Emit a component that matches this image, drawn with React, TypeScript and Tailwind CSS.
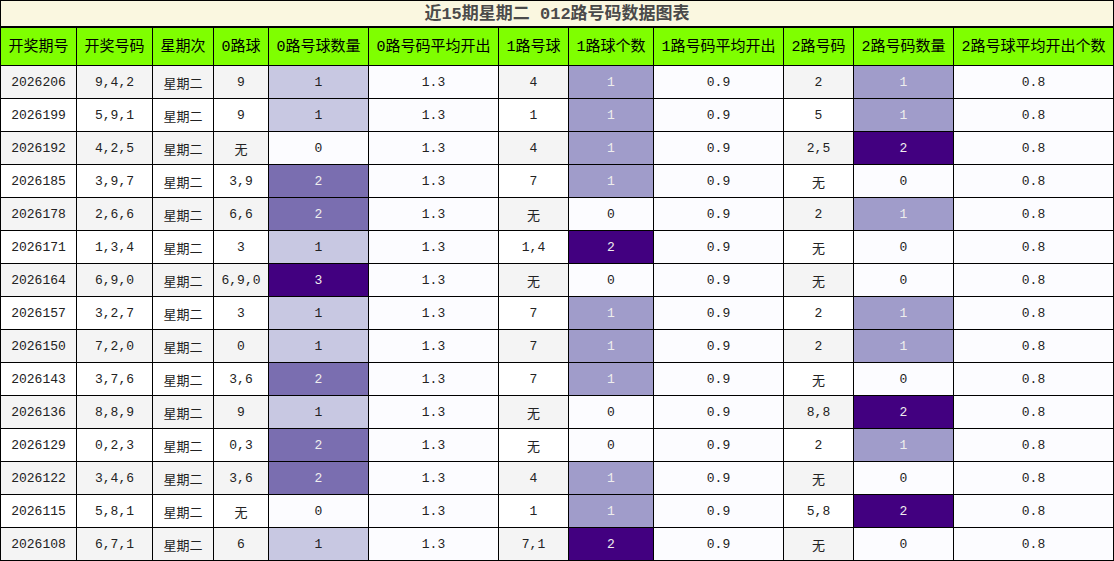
const headers = [
  "开奖期号",
  "开奖号码",
  "星期次",
  "0路球",
  "0路号球数量",
  "0路号码平均开出",
  "1路号球",
  "1路球个数",
  "1路号码平均开出",
  "2路号码",
  "2路号码数量",
  "2路号球平均开出个数",
]

type Row = [string, string, string, number, string, number, string, number]

const rows: Row[] = [
  ["2026206", "9,4,2", "9", 1, "4", 1, "2", 1],
  ["2026199", "5,9,1", "9", 1, "1", 1, "5", 1],
  ["2026192", "4,2,5", "无", 0, "4", 1, "2,5", 2],
  ["2026185", "3,9,7", "3,9", 2, "7", 1, "无", 0],
  ["2026178", "2,6,6", "6,6", 2, "无", 0, "2", 1],
  ["2026171", "1,3,4", "3", 1, "1,4", 2, "无", 0],
  ["2026164", "6,9,0", "6,9,0", 3, "无", 0, "无", 0],
  ["2026157", "3,2,7", "3", 1, "7", 1, "2", 1],
  ["2026150", "7,2,0", "0", 1, "7", 1, "2", 1],
  ["2026143", "3,7,6", "3,6", 2, "7", 1, "无", 0],
  ["2026136", "8,8,9", "9", 1, "无", 0, "8,8", 2],
  ["2026129", "0,2,3", "0,3", 2, "无", 0, "2", 1],
  ["2026122", "3,4,6", "3,6", 2, "4", 1, "无", 0],
  ["2026115", "5,8,1", "无", 0, "1", 1, "5,8", 2],
  ["2026108", "6,7,1", "6", 1, "7,1", 2, "无", 0],
]

// 0路 has max 3, the other two max 2
const zeroScale = (n: number) => {
  if (n === 3) return "bg-[#420080] text-[#eeeeee]"
  if (n === 2) return "bg-[#7a6eb0] text-[#eeeeee]"
  if (n === 1) return "bg-[#c8c8e2] text-[#222222]"
  return "bg-[#fcfcff] text-[#222222]"
}

const otherScale = (n: number) => {
  if (n === 2) return "bg-[#420080] text-[#eeeeee]"
  if (n === 1) return "bg-[#a09cca] text-[#eeeeee]"
  return "bg-[#fcfcff] text-[#222222]"
}

const Cell = ({ children, className }: { children: React.ReactNode; className: string }) => {
  // chinese text sits a little lower than the digits
  const cjk = children === "无" || children === "星期二"
  return (
    <div className={`flex items-center justify-center text-[13px] ${cjk ? "pt-[6px]" : "pt-[2px]"} ${className}`}>
      {children}
    </div>
  )
}

export default function App() {
  return (
    <div
      className="w-[1114px] h-[561px] border border-black bg-white overflow-hidden"
      style={{ fontFamily: '"Liberation Mono", "Noto Sans CJK SC", monospace' }}
    >
      <div className="h-[27px] pt-[3px] border-b-2 border-black bg-[#faf7e0] flex items-center justify-center text-[17px] font-bold text-[#4a4a4a]">
        近15期星期二 012路号码数据图表
      </div>
      <div className="grid grid-cols-[75px_75px_60px_54px_99px_129px_69px_84px_129px_69px_99px_159px] grid-rows-[37px_repeat(15,32px)] gap-px bg-black">
        {headers.map((h) => (
          <div key={h} className="bg-[#7fff00] pt-[4px] flex items-center justify-center text-[15px] text-black whitespace-nowrap">
            {h}
          </div>
        ))}
        {rows.map((r, i) => {
          const stripe = i % 2 === 0 ? "bg-[#f4f4f4] text-[#222222]" : "bg-white text-[#222222]"
          const avg = "bg-[#fcfcff] text-[#222222]"
          return [
            <Cell key={`${i}-a`} className={stripe}>{r[0]}</Cell>,
            <Cell key={`${i}-b`} className={stripe}>{r[1]}</Cell>,
            <Cell key={`${i}-c`} className={stripe}>星期二</Cell>,
            <Cell key={`${i}-d`} className={stripe}>{r[2]}</Cell>,
            <Cell key={`${i}-e`} className={zeroScale(r[3])}>{r[3]}</Cell>,
            <Cell key={`${i}-f`} className={avg}>1.3</Cell>,
            <Cell key={`${i}-g`} className={stripe}>{r[4]}</Cell>,
            <Cell key={`${i}-h`} className={otherScale(r[5])}>{r[5]}</Cell>,
            <Cell key={`${i}-i`} className={avg}>0.9</Cell>,
            <Cell key={`${i}-j`} className={stripe}>{r[6]}</Cell>,
            <Cell key={`${i}-k`} className={otherScale(r[7])}>{r[7]}</Cell>,
            <Cell key={`${i}-l`} className={avg}>0.8</Cell>,
          ]
        })}
      </div>
    </div>
  )
}
